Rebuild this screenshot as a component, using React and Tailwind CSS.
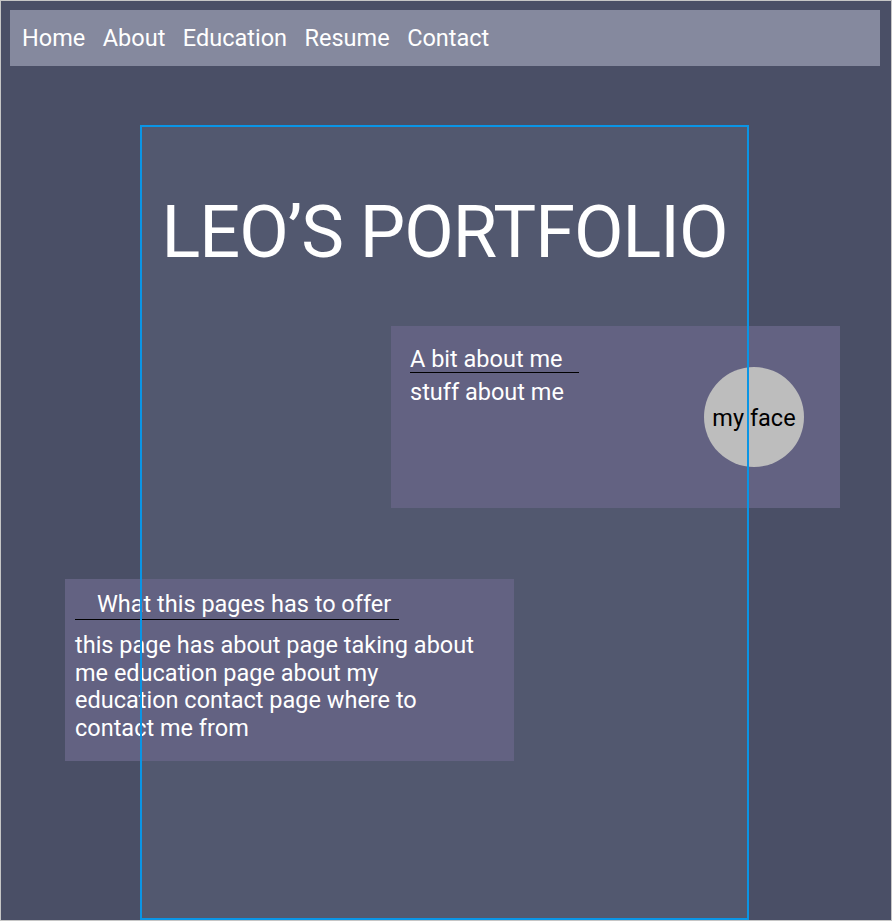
export default function App() {
  return (
    <div
      className="w-[892px] h-[921px] border border-[#c6c6c6] bg-[#4a4f66] overflow-hidden text-white"
      style={{ fontFamily: 'Roboto, "Noto Sans", sans-serif' }}
    >
      <nav className="ml-[9px] mt-[9px] w-[870px] h-[56px] bg-[#85899e] flex items-center pl-[12px] pt-[2px] gap-[17.5px] text-[23.5px]">
        <a>Home</a>
        <a>About</a>
        <a>Education</a>
        <a>Resume</a>
        <a>Contact</a>
      </nav>

      <div className="relative ml-[139px] mt-[59px] w-[609px] h-[795px] bg-[#52586f] p-[2px]">
        <h1 className="mt-[70px] text-[72px] leading-none tracking-[-1px] text-center font-normal whitespace-nowrap">LEO’S PORTFOLIO</h1>

        <section className="mt-[57px] ml-[249px] w-[449px] h-[182px] bg-[#636282] flex justify-between items-start">
          <div className="pl-[19px] pt-[20px] text-[23.5px]">
            <h2 className="w-[169px] leading-[26px] border-b border-black font-normal">A bit about me</h2>
            <p className="leading-[38px]">stuff about me</p>
          </div>
          <div className="self-center mr-[36px] w-[100px] h-[100px] rounded-full bg-[#bdbdbd] flex items-center justify-center pt-[3px] text-black text-[23.5px]">
            my face
          </div>
        </section>

        <section className="mt-[71px] ml-[-77px] w-[449px] h-[182px] bg-[#636282] pt-[10px] text-[23.5px]">
          <h2 className="ml-[10px] w-[324px] pl-[22px] leading-[30px] border-b border-black font-normal">
            What this pages has to offer
          </h2>
          <p className="ml-[10px] mt-[12px] w-[412px] leading-[27.7px]">
            this page has about page taking about me education page about my education contact page where to contact me from
          </p>
        </section>

        <div className="absolute inset-0 border-2 border-[#0a95e5] pointer-events-none"></div>
      </div>
    </div>
  );
}
